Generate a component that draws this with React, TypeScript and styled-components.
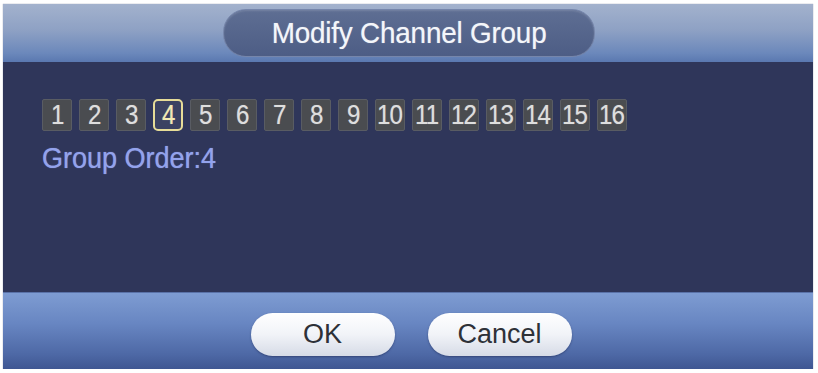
import React from "react";
import styled, { createGlobalStyle } from "styled-components";

const GlobalStyle = createGlobalStyle`
  html, body {
    margin: 0;
    padding: 0;
    background: #ffffff;
  }
  body {
    font-family: "Liberation Sans", Arial, sans-serif;
  }
`;

const Frame = styled.div`
  width: 810px;
  height: 365px;
  margin: 4px 0 0 3px;
  display: flex;
  flex-direction: column;
  box-shadow: 0 0 1px rgba(60, 70, 110, 0.6);
`;

const Header = styled.div`
  height: 58px;
  display: flex;
  align-items: center;
  justify-content: center;
  background: linear-gradient(#a3b2cd 0%, #8ea1c4 45%, #6b88bb 85%, #5a78b0 100%);
`;

const TitlePill = styled.div`
  width: 370px;
  height: 46px;
  margin-left: 2px;
  border-radius: 23px;
  display: flex;
  align-items: center;
  justify-content: center;
  background: linear-gradient(#5e6e93, #4d5d85);
  border: 1px solid #7686ab;
  box-shadow: inset 0 1px 2px rgba(255, 255, 255, 0.15);
  color: #f4f6fa;
  font-size: 29px;
  letter-spacing: -0.2px;
  text-shadow: 0 0 1px rgba(255, 255, 255, 0.5);
`;

const Condensed = styled.span<{ $scale: number }>`
  display: inline-block;
  transform: scaleX(${p => p.$scale});
  transform-origin: center;
`;

const Body = styled.div`
  flex: 1;
  background: #2f365a;
  padding: 37px 0 0 39px;
`;

const Channels = styled.div`
  display: flex;
  gap: 7px;
`;

const Channel = styled.div<{ $active?: boolean }>`
  width: 30px;
  height: 32px;
  box-sizing: border-box;
  display: flex;
  align-items: center;
  justify-content: center;
  white-space: nowrap;
  border-radius: ${p => (p.$active ? "5px" : "2px")};
  background: ${p => (p.$active ? "#3b4262" : "#4a4c50")};
  border: ${p => (p.$active ? "2px solid #e6dc98" : "1px solid #595c63")};
  color: ${p => (p.$active ? "#f3eab0" : "#dedede")};
  font-size: 28px;
  letter-spacing: -1px;
  text-shadow: 0 0 1px rgba(230, 230, 230, 0.5);
`;

const Label = styled.div`
  margin-top: 11px;
  color: #93a3ec;
  font-size: 30px;
  line-height: 32px;
  text-shadow: 0 0 1px rgba(147, 163, 236, 0.8);
  transform: scaleX(0.9);
  transform-origin: left center;
`;

const Footer = styled.div`
  height: 77px;
  box-sizing: border-box;
  padding-top: 20px;
  display: flex;
  justify-content: center;
  gap: 33px;
  background: linear-gradient(#7e9cd2 0%, #6886c2 40%, #4e69a6 80%, #3f5692 100%);
  border-top: 1px solid #5a72a8;
`;

const Button = styled.button<{ $shift?: number }>`
  width: 144px;
  height: 43px;
  border: none;
  border-radius: 22px;
  background: linear-gradient(#ffffff 0%, #f1f3f8 50%, #d6dbe6 100%);
  box-shadow: 0 1px 2px rgba(30, 40, 80, 0.5);
  color: #2e3138;
  font-family: "Liberation Sans", Arial, sans-serif;
  font-size: 27px;
  padding: 0;
  margin-left: ${p => p.$shift ?? 0}px;
`;

const channels = Array.from({ length: 16 }, (_, i) => i + 1);

export default function App() {
  return (
    <>
      <GlobalStyle />
      <Frame>
        <Header>
          <TitlePill>
            <Condensed $scale={0.96}>Modify Channel Group</Condensed>
          </TitlePill>
        </Header>
        <Body>
          <Channels>
            {channels.map(n => (
              <Channel key={n} $active={n === 4}>
                <Condensed $scale={0.86}>{n}</Condensed>
              </Channel>
            ))}
          </Channels>
          <Label>Group Order:4</Label>
        </Body>
        <Footer>
          <Button $shift={6}>OK</Button>
          <Button>Cancel</Button>
        </Footer>
      </Frame>
    </>
  );
}
